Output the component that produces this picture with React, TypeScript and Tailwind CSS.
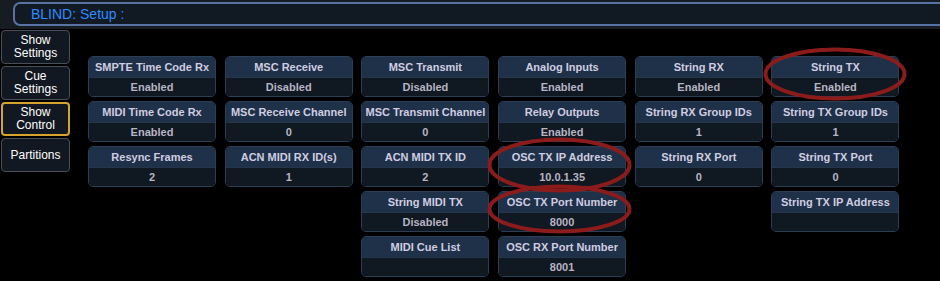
import React from 'react';

interface Field {
  label: string;
  value: string;
}

const columns: Field[][] = [
  [
    { label: 'SMPTE Time Code Rx', value: 'Enabled' },
    { label: 'MIDI Time Code Rx', value: 'Enabled' },
    { label: 'Resync Frames', value: '2' },
  ],
  [
    { label: 'MSC Receive', value: 'Disabled' },
    { label: 'MSC Receive Channel', value: '0' },
    { label: 'ACN MIDI RX ID(s)', value: '1' },
  ],
  [
    { label: 'MSC Transmit', value: 'Disabled' },
    { label: 'MSC Transmit Channel', value: '0' },
    { label: 'ACN MIDI TX ID', value: '2' },
    { label: 'String MIDI TX', value: 'Disabled' },
    { label: 'MIDI Cue List', value: '' },
  ],
  [
    { label: 'Analog Inputs', value: 'Enabled' },
    { label: 'Relay Outputs', value: 'Enabled' },
    { label: 'OSC TX IP Address', value: '10.0.1.35' },
    { label: 'OSC TX Port Number', value: '8000' },
    { label: 'OSC RX Port Number', value: '8001' },
  ],
  [
    { label: 'String RX', value: 'Enabled' },
    { label: 'String RX Group IDs', value: '1' },
    { label: 'String RX Port', value: '0' },
  ],
  [
    { label: 'String TX', value: 'Enabled' },
    { label: 'String TX Group IDs', value: '1' },
    { label: 'String TX Port', value: '0' },
    { label: 'String TX IP Address', value: '' },
  ],
];

const tabs = [
  { label: ['Show', 'Settings'], active: false },
  { label: ['Cue', 'Settings'], active: false },
  { label: ['Show', 'Control'], active: true },
  { label: ['Partitions'], active: false },
];

const Tile: React.FC<{ field: Field }> = ({ field }) => (
  <div className="w-[128px] h-[41px] rounded-[5px] border border-[#2c3e54] overflow-hidden flex flex-col">
    <div className="h-[20px] bg-[#1f3148] flex items-center justify-center text-[11px] font-bold text-[#d0cde0] whitespace-nowrap">
      {field.label}
    </div>
    <div className="flex-1 bg-[#101821] border-t border-[#25364a] flex items-center justify-center text-[11px] font-bold text-[#b7b4c4]">
      {field.value}
    </div>
  </div>
);

export default function App() {
  return (
    <div className="relative w-[940px] h-[281px] bg-black overflow-hidden font-['Liberation_Sans',Arial,sans-serif]">
      {/* Заголовок */}
      <div className="h-[29px] bg-[#171c23] pl-[13px] pt-[2px]">
        <div className="h-[24px] rounded-l-[7px] border-2 border-r-0 border-[#5873a3] bg-[#111923] flex items-center pl-[16px] text-[14px] text-[#2a8cff]">
          BLIND: Setup :
        </div>
      </div>

      <div className="flex">
        {/* Вкладки */}
        <div className="w-[71px] pl-[1px] pt-[1px] flex flex-col gap-[2px]">
          {tabs.map((t, i) => (
            <div
              key={i}
              className={`w-[69px] h-[34px] rounded-[4px] bg-[#121821] flex flex-col items-center justify-center text-white text-[12px] leading-[13px] ${
                t.active ? 'border-2 border-[#d6a32c]' : 'border border-[#4a4d56]'
              }`}
            >
              {t.label.map((l) => (
                <span key={l}>{l}</span>
              ))}
            </div>
          ))}
        </div>

        {/* Поля настроек */}
        <div className="ml-[17px] mt-[27px] flex gap-[8.7px]">
          {columns.map((col, i) => (
            <div key={i} className="flex flex-col gap-[4px]">
              {col.map((f) => (
                <Tile key={f.label} field={f} />
              ))}
            </div>
          ))}
        </div>
      </div>

      {/* Пометки */}
      <svg className="absolute left-0 top-0 pointer-events-none" width="940" height="281">
        <ellipse cx="835" cy="74" rx="69.5" ry="24.5" fill="none" stroke="#8c1b1b" strokeWidth="4" />
        <ellipse cx="559.5" cy="165" rx="70" ry="25.5" fill="none" stroke="#8c1b1b" strokeWidth="4" />
        <ellipse cx="559.5" cy="209" rx="70" ry="22.5" fill="none" stroke="#8c1b1b" strokeWidth="4" />
      </svg>
    </div>
  );
}
